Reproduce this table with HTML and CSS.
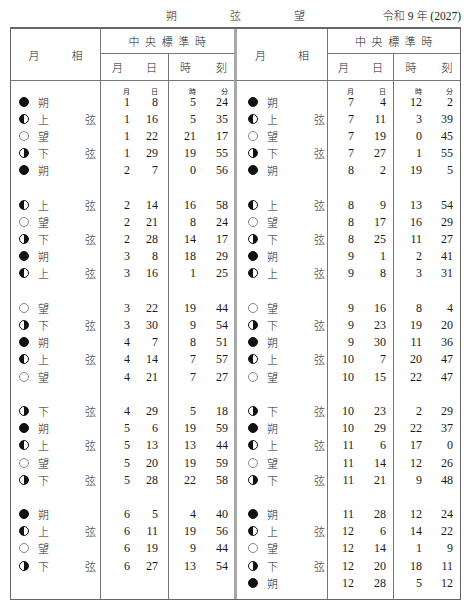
FILE: index.html
```html
<!DOCTYPE html>
<html lang="ja">
<head>
<meta charset="utf-8">
<title>朔弦望 令和9年</title>
<link rel="stylesheet" href="styles.css">
</head>
<body>
<div class="page">
  <div class="title">
    <div class="title-side"></div>
    <div class="title-main"><span>朔</span><span>弦</span><span>望</span></div>
    <div class="title-side era"><span class="jk">令和</span><span class="yr">9</span><span class="jk">年</span> (2027)</div>
  </div>
  <table class="tbl">
    <colgroup>
      <col class="w-ph"><col class="w-mo"><col class="w-dy"><col class="w-hr"><col class="w-mi">
      <col class="w-ph2"><col class="w-mo2"><col class="w-dy2"><col class="w-hr2"><col class="w-mi2">
    </colgroup>
    <thead>
      <tr class="h1">
        <th rowspan="2" class="hph"><div class="pair pair-ph"><span>月</span><span>相</span></div></th>
        <th colspan="4" class="bl"><div class="spread">中央標準時</div></th>
        <th rowspan="2" class="hph mid"><div class="pair pair-ph"><span>月</span><span>相</span></div></th>
        <th colspan="4" class="bl"><div class="spread">中央標準時</div></th>
      </tr>
      <tr class="h2">
        <th colspan="2" class="bl bt"><div class="pair pair-md"><span>月</span><span>日</span></div></th>
        <th colspan="2" class="bl bt"><div class="pair pair-hm"><span>時</span><span>刻</span></div></th>
        <th colspan="2" class="bl bt"><div class="pair pair-md"><span>月</span><span>日</span></div></th>
        <th colspan="2" class="bl bt"><div class="pair pair-hm"><span>時</span><span>刻</span></div></th>
      </tr>
    </thead>
    <tbody>
      <tr class="units">
        <td></td><td class="bl mo"><span class="u">月</span></td><td class="dy"><span class="u">日</span></td><td class="bl hr"><span class="u">時</span></td><td class="mi"><span class="u">分</span></td>
        <td class="mid"></td><td class="bl mo2"><span class="u">月</span></td><td class="dy2"><span class="u">日</span></td><td class="bl hr2"><span class="u">時</span></td><td class="mi2"><span class="u">分</span></td>
      </tr>
      <tr><td><div class="ph"><i class="moon new"></i><span class="k1">朔</span><span class="k2"></span></div></td><td class="bl mo">1</td><td class="dy">8</td><td class="bl hr">5</td><td class="mi">24</td>
          <td class="mid"><div class="ph ph2"><i class="moon new"></i><span class="k1">朔</span><span class="k2"></span></div></td><td class="bl mo2">7</td><td class="dy2">4</td><td class="bl hr2">12</td><td class="mi2">2</td></tr>
      <tr><td><div class="ph"><i class="moon first"></i><span class="k1">上</span><span class="k2">弦</span></div></td><td class="bl mo">1</td><td class="dy">16</td><td class="bl hr">5</td><td class="mi">35</td>
          <td class="mid"><div class="ph ph2"><i class="moon first"></i><span class="k1">上</span><span class="k2">弦</span></div></td><td class="bl mo2">7</td><td class="dy2">11</td><td class="bl hr2">3</td><td class="mi2">39</td></tr>
      <tr><td><div class="ph"><i class="moon full"></i><span class="k1">望</span><span class="k2"></span></div></td><td class="bl mo">1</td><td class="dy">22</td><td class="bl hr">21</td><td class="mi">17</td>
          <td class="mid"><div class="ph ph2"><i class="moon full"></i><span class="k1">望</span><span class="k2"></span></div></td><td class="bl mo2">7</td><td class="dy2">19</td><td class="bl hr2">0</td><td class="mi2">45</td></tr>
      <tr><td><div class="ph"><i class="moon last"></i><span class="k1">下</span><span class="k2">弦</span></div></td><td class="bl mo">1</td><td class="dy">29</td><td class="bl hr">19</td><td class="mi">55</td>
          <td class="mid"><div class="ph ph2"><i class="moon last"></i><span class="k1">下</span><span class="k2">弦</span></div></td><td class="bl mo2">7</td><td class="dy2">27</td><td class="bl hr2">1</td><td class="mi2">55</td></tr>
      <tr><td><div class="ph"><i class="moon new"></i><span class="k1">朔</span><span class="k2"></span></div></td><td class="bl mo">2</td><td class="dy">7</td><td class="bl hr">0</td><td class="mi">56</td>
          <td class="mid"><div class="ph ph2"><i class="moon new"></i><span class="k1">朔</span><span class="k2"></span></div></td><td class="bl mo2">8</td><td class="dy2">2</td><td class="bl hr2">19</td><td class="mi2">5</td></tr>
      <tr class="gap"><td></td><td class="bl"></td><td></td><td class="bl"></td><td></td><td class="mid"></td><td class="bl"></td><td></td><td class="bl"></td><td></td></tr>
      <tr><td><div class="ph"><i class="moon first"></i><span class="k1">上</span><span class="k2">弦</span></div></td><td class="bl mo">2</td><td class="dy">14</td><td class="bl hr">16</td><td class="mi">58</td>
          <td class="mid"><div class="ph ph2"><i class="moon first"></i><span class="k1">上</span><span class="k2">弦</span></div></td><td class="bl mo2">8</td><td class="dy2">9</td><td class="bl hr2">13</td><td class="mi2">54</td></tr>
      <tr><td><div class="ph"><i class="moon full"></i><span class="k1">望</span><span class="k2"></span></div></td><td class="bl mo">2</td><td class="dy">21</td><td class="bl hr">8</td><td class="mi">24</td>
          <td class="mid"><div class="ph ph2"><i class="moon full"></i><span class="k1">望</span><span class="k2"></span></div></td><td class="bl mo2">8</td><td class="dy2">17</td><td class="bl hr2">16</td><td class="mi2">29</td></tr>
      <tr><td><div class="ph"><i class="moon last"></i><span class="k1">下</span><span class="k2">弦</span></div></td><td class="bl mo">2</td><td class="dy">28</td><td class="bl hr">14</td><td class="mi">17</td>
          <td class="mid"><div class="ph ph2"><i class="moon last"></i><span class="k1">下</span><span class="k2">弦</span></div></td><td class="bl mo2">8</td><td class="dy2">25</td><td class="bl hr2">11</td><td class="mi2">27</td></tr>
      <tr><td><div class="ph"><i class="moon new"></i><span class="k1">朔</span><span class="k2"></span></div></td><td class="bl mo">3</td><td class="dy">8</td><td class="bl hr">18</td><td class="mi">29</td>
          <td class="mid"><div class="ph ph2"><i class="moon new"></i><span class="k1">朔</span><span class="k2"></span></div></td><td class="bl mo2">9</td><td class="dy2">1</td><td class="bl hr2">2</td><td class="mi2">41</td></tr>
      <tr><td><div class="ph"><i class="moon first"></i><span class="k1">上</span><span class="k2">弦</span></div></td><td class="bl mo">3</td><td class="dy">16</td><td class="bl hr">1</td><td class="mi">25</td>
          <td class="mid"><div class="ph ph2"><i class="moon first"></i><span class="k1">上</span><span class="k2">弦</span></div></td><td class="bl mo2">9</td><td class="dy2">8</td><td class="bl hr2">3</td><td class="mi2">31</td></tr>
      <tr class="gap"><td></td><td class="bl"></td><td></td><td class="bl"></td><td></td><td class="mid"></td><td class="bl"></td><td></td><td class="bl"></td><td></td></tr>
      <tr><td><div class="ph"><i class="moon full"></i><span class="k1">望</span><span class="k2"></span></div></td><td class="bl mo">3</td><td class="dy">22</td><td class="bl hr">19</td><td class="mi">44</td>
          <td class="mid"><div class="ph ph2"><i class="moon full"></i><span class="k1">望</span><span class="k2"></span></div></td><td class="bl mo2">9</td><td class="dy2">16</td><td class="bl hr2">8</td><td class="mi2">4</td></tr>
      <tr><td><div class="ph"><i class="moon last"></i><span class="k1">下</span><span class="k2">弦</span></div></td><td class="bl mo">3</td><td class="dy">30</td><td class="bl hr">9</td><td class="mi">54</td>
          <td class="mid"><div class="ph ph2"><i class="moon last"></i><span class="k1">下</span><span class="k2">弦</span></div></td><td class="bl mo2">9</td><td class="dy2">23</td><td class="bl hr2">19</td><td class="mi2">20</td></tr>
      <tr><td><div class="ph"><i class="moon new"></i><span class="k1">朔</span><span class="k2"></span></div></td><td class="bl mo">4</td><td class="dy">7</td><td class="bl hr">8</td><td class="mi">51</td>
          <td class="mid"><div class="ph ph2"><i class="moon new"></i><span class="k1">朔</span><span class="k2"></span></div></td><td class="bl mo2">9</td><td class="dy2">30</td><td class="bl hr2">11</td><td class="mi2">36</td></tr>
      <tr><td><div class="ph"><i class="moon first"></i><span class="k1">上</span><span class="k2">弦</span></div></td><td class="bl mo">4</td><td class="dy">14</td><td class="bl hr">7</td><td class="mi">57</td>
          <td class="mid"><div class="ph ph2"><i class="moon first"></i><span class="k1">上</span><span class="k2">弦</span></div></td><td class="bl mo2">10</td><td class="dy2">7</td><td class="bl hr2">20</td><td class="mi2">47</td></tr>
      <tr><td><div class="ph"><i class="moon full"></i><span class="k1">望</span><span class="k2"></span></div></td><td class="bl mo">4</td><td class="dy">21</td><td class="bl hr">7</td><td class="mi">27</td>
          <td class="mid"><div class="ph ph2"><i class="moon full"></i><span class="k1">望</span><span class="k2"></span></div></td><td class="bl mo2">10</td><td class="dy2">15</td><td class="bl hr2">22</td><td class="mi2">47</td></tr>
      <tr class="gap"><td></td><td class="bl"></td><td></td><td class="bl"></td><td></td><td class="mid"></td><td class="bl"></td><td></td><td class="bl"></td><td></td></tr>
      <tr><td><div class="ph"><i class="moon last"></i><span class="k1">下</span><span class="k2">弦</span></div></td><td class="bl mo">4</td><td class="dy">29</td><td class="bl hr">5</td><td class="mi">18</td>
          <td class="mid"><div class="ph ph2"><i class="moon last"></i><span class="k1">下</span><span class="k2">弦</span></div></td><td class="bl mo2">10</td><td class="dy2">23</td><td class="bl hr2">2</td><td class="mi2">29</td></tr>
      <tr><td><div class="ph"><i class="moon new"></i><span class="k1">朔</span><span class="k2"></span></div></td><td class="bl mo">5</td><td class="dy">6</td><td class="bl hr">19</td><td class="mi">59</td>
          <td class="mid"><div class="ph ph2"><i class="moon new"></i><span class="k1">朔</span><span class="k2"></span></div></td><td class="bl mo2">10</td><td class="dy2">29</td><td class="bl hr2">22</td><td class="mi2">37</td></tr>
      <tr><td><div class="ph"><i class="moon first"></i><span class="k1">上</span><span class="k2">弦</span></div></td><td class="bl mo">5</td><td class="dy">13</td><td class="bl hr">13</td><td class="mi">44</td>
          <td class="mid"><div class="ph ph2"><i class="moon first"></i><span class="k1">上</span><span class="k2">弦</span></div></td><td class="bl mo2">11</td><td class="dy2">6</td><td class="bl hr2">17</td><td class="mi2">0</td></tr>
      <tr><td><div class="ph"><i class="moon full"></i><span class="k1">望</span><span class="k2"></span></div></td><td class="bl mo">5</td><td class="dy">20</td><td class="bl hr">19</td><td class="mi">59</td>
          <td class="mid"><div class="ph ph2"><i class="moon full"></i><span class="k1">望</span><span class="k2"></span></div></td><td class="bl mo2">11</td><td class="dy2">14</td><td class="bl hr2">12</td><td class="mi2">26</td></tr>
      <tr><td><div class="ph"><i class="moon last"></i><span class="k1">下</span><span class="k2">弦</span></div></td><td class="bl mo">5</td><td class="dy">28</td><td class="bl hr">22</td><td class="mi">58</td>
          <td class="mid"><div class="ph ph2"><i class="moon last"></i><span class="k1">下</span><span class="k2">弦</span></div></td><td class="bl mo2">11</td><td class="dy2">21</td><td class="bl hr2">9</td><td class="mi2">48</td></tr>
      <tr class="gap"><td></td><td class="bl"></td><td></td><td class="bl"></td><td></td><td class="mid"></td><td class="bl"></td><td></td><td class="bl"></td><td></td></tr>
      <tr><td><div class="ph"><i class="moon new"></i><span class="k1">朔</span><span class="k2"></span></div></td><td class="bl mo">6</td><td class="dy">5</td><td class="bl hr">4</td><td class="mi">40</td>
          <td class="mid"><div class="ph ph2"><i class="moon new"></i><span class="k1">朔</span><span class="k2"></span></div></td><td class="bl mo2">11</td><td class="dy2">28</td><td class="bl hr2">12</td><td class="mi2">24</td></tr>
      <tr><td><div class="ph"><i class="moon first"></i><span class="k1">上</span><span class="k2">弦</span></div></td><td class="bl mo">6</td><td class="dy">11</td><td class="bl hr">19</td><td class="mi">56</td>
          <td class="mid"><div class="ph ph2"><i class="moon first"></i><span class="k1">上</span><span class="k2">弦</span></div></td><td class="bl mo2">12</td><td class="dy2">6</td><td class="bl hr2">14</td><td class="mi2">22</td></tr>
      <tr><td><div class="ph"><i class="moon full"></i><span class="k1">望</span><span class="k2"></span></div></td><td class="bl mo">6</td><td class="dy">19</td><td class="bl hr">9</td><td class="mi">44</td>
          <td class="mid"><div class="ph ph2"><i class="moon full"></i><span class="k1">望</span><span class="k2"></span></div></td><td class="bl mo2">12</td><td class="dy2">14</td><td class="bl hr2">1</td><td class="mi2">9</td></tr>
      <tr><td><div class="ph"><i class="moon last"></i><span class="k1">下</span><span class="k2">弦</span></div></td><td class="bl mo">6</td><td class="dy">27</td><td class="bl hr">13</td><td class="mi">54</td>
          <td class="mid"><div class="ph ph2"><i class="moon last"></i><span class="k1">下</span><span class="k2">弦</span></div></td><td class="bl mo2">12</td><td class="dy2">20</td><td class="bl hr2">18</td><td class="mi2">11</td></tr>
      <tr><td></td><td class="bl mo"></td><td class="dy"></td><td class="bl hr"></td><td class="mi"></td>
          <td class="mid"><div class="ph ph2"><i class="moon new"></i><span class="k1">朔</span><span class="k2"></span></div></td><td class="bl mo2">12</td><td class="dy2">28</td><td class="bl hr2">5</td><td class="mi2">12</td></tr>
      <tr class="foot"><td></td><td class="bl"></td><td></td><td class="bl"></td><td></td><td class="mid"></td><td class="bl"></td><td></td><td class="bl"></td><td></td></tr>
    </tbody>
  </table>
</div>
</body>
</html>
```
FILE: styles.css
```css
* { box-sizing: border-box; }
html, body { margin: 0; padding: 0; background: #fff; }
body {
  font-family: "Liberation Serif", "Noto Sans CJK JP", serif;
  color: #1a1a1a;
  width: 471px;
  height: 611px;
  overflow: hidden;
}
.page { padding: 0 0 0 10px; }

.title {
  width: 451px;
  height: 27px;
  display: grid;
  grid-template-columns: 1fr auto 1fr;
  align-items: center;
  font-size: 11px;
  padding-top: 2px;
}
.title-main { display: flex; gap: 53px; font-family: "Noto Sans CJK JP", sans-serif; font-weight: 300; color: #222; }
.era { text-align: right; font-size: 11.5px; color: #222; }
.jk { font-family: "Noto Sans CJK JP", sans-serif; font-weight: 300; font-size: 11px; }
.yr { margin: 0 3px; }

.tbl {
  border-collapse: separate;
  border-spacing: 0;
  table-layout: fixed;
  width: 451px;
  border: 1px solid #666;
  border-top: 2px solid #666;
}
.w-ph { width: 89px; }
.w-mo { width: 34px; }
.w-dy { width: 34px; }
.w-hr { width: 33px; }
.w-mi { width: 33px; }
.w-ph2 { width: 93px; }
.w-mo2 { width: 33px; }
.w-dy2 { width: 33px; }
.w-hr2 { width: 34px; }
.w-mi2 { width: 33px; }

th, td { padding: 0; }
th {
  font-weight: 300;
  font-family: "Noto Sans CJK JP", sans-serif;
  font-size: 11px;
  color: #222;
}
.bl { border-left: 1px solid #777; }
.bt { border-top: 1px solid #777; }
.mid { border-left: 3px solid #a8a8a8; }
.h1 { height: 24px; }
.h2 { height: 28px; }
.h2 th { border-bottom: 1px solid #777; }
.hph { border-bottom: 1px solid #777; }

.pair { display: flex; justify-content: center; }
.pair-ph { gap: 32px; }
.pair-md { gap: 23px; }
.pair-hm { gap: 25px; padding-left: 4px; }
.spread { letter-spacing: 5.6px; padding-left: 5px; }

tbody td {
  font-size: 12px;
  line-height: 12px;
  text-align: right;
  vertical-align: middle;
  color: #1a1a1a;
}
tbody tr { height: 17.2px; }
tbody tr.units { height: 12px; }
tbody tr.units td { vertical-align: bottom; line-height: 7px; padding-bottom: 0; }
tbody tr.foot { height: 7.2px; }
.u {
  display: inline-block;
  font-family: "Noto Sans CJK JP", sans-serif;
  font-size: 7px;
  line-height: 7px;
  transform: translateY(2px);
}
.mo { padding-right: 4px; }
.dy { padding-right: 10px; }
.hr { padding-right: 5px; }
.mi { padding-right: 6px; }
.mo2 { padding-right: 6px; }
.dy2 { padding-right: 7px; }
.hr2 { padding-right: 5px; }
.mi2 { padding-right: 7px; }

.ph {
  display: flex;
  align-items: center;
  padding-left: 8px;
  font-family: "Noto Sans CJK JP", sans-serif;
  font-weight: 300;
  font-size: 11px;
  line-height: 12px;
  text-align: left;
  color: #222;
}
.ph2 { padding-left: 11px; }
.k1 { width: 47px; }
.k2 { width: 12px; }

.moon {
  display: inline-block;
  width: 10px;
  height: 10px;
  border-radius: 50%;
  border: 1px solid #111;
  margin-right: 9px;
  flex: none;
}
.moon.new { background: #111; }
.moon.full { border-color: #888; background: #fff; }
.moon.first { background: linear-gradient(to right, #111 50%, #fff 50%); }
.moon.last { background: linear-gradient(to right, #fff 50%, #111 50%); }
```
